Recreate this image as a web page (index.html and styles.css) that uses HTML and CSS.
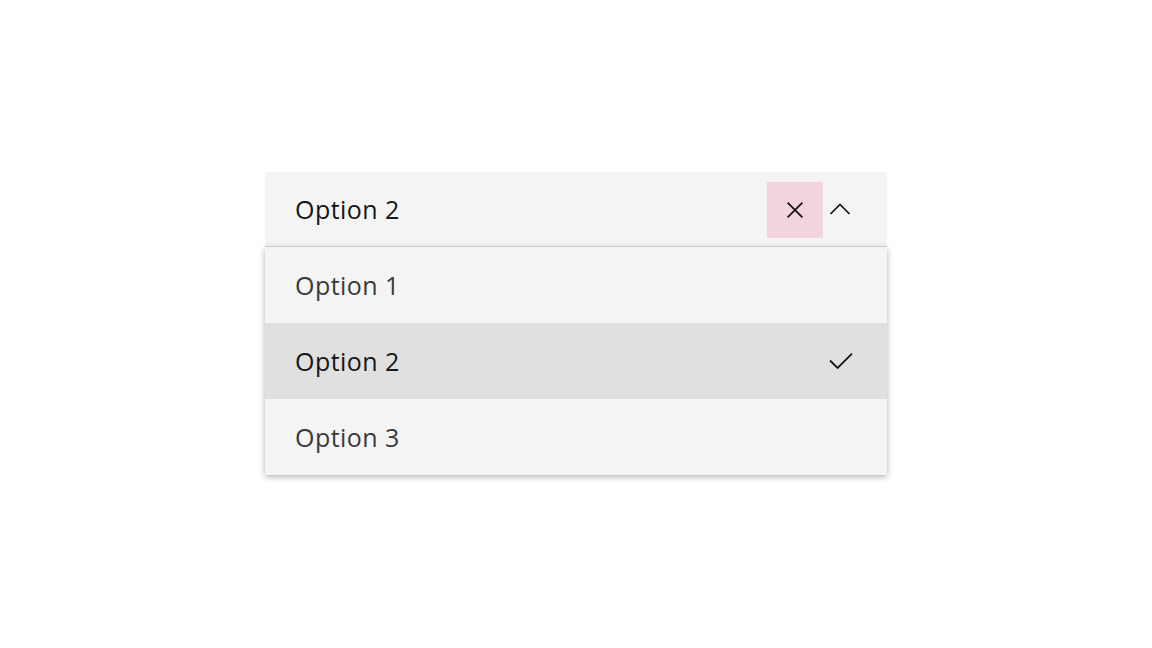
FILE: index.html
```html
<!DOCTYPE html>
<html>
<head>
<meta charset="utf-8">
<link rel="stylesheet" href="styles.css">
</head>
<body>
<div class="combo">
  <div class="field">
    <span class="value">Option 2</span>
    <button class="clear" aria-label="Clear">
      <svg width="24" height="24" viewBox="0 0 24 24"><path d="M4.6 4.6 L19.4 19.4 M19.4 4.6 L4.6 19.4" stroke="#161616" stroke-width="1.8" fill="none"/></svg>
    </button>
    <span class="chevron">
      <svg width="24" height="24" viewBox="0 0 24 24"><path d="M2.5 17 L12 7.5 L21.5 17" stroke="#161616" stroke-width="1.7" fill="none"/></svg>
    </span>
  </div>
  <ul class="menu">
    <li class="item">Option 1</li>
    <li class="item selected">Option 2
      <svg class="check" width="24" height="24" viewBox="0 0 24 24"><path d="M1 11.5 L8.6 19 L23 4.6" stroke="#161616" stroke-width="1.8" fill="none"/></svg>
    </li>
    <li class="item">Option 3</li>
  </ul>
</div>
</body>
</html>
```

FILE: styles.css
```css
html, body {
  margin: 0;
  padding: 0;
  height: 100%;
}
body {
  background: #ffffff;
  display: flex;
  align-items: center;
  justify-content: center;
  font-family: "Open Sans", "Noto Sans", sans-serif;
}
.combo {
  width: 622px;
  margin-top: -1px;
}
.field {
  height: 74px;
  background: #f4f4f4;
  border-bottom: 1px solid #dcdcdc;
  display: flex;
  align-items: center;
  padding: 0 35px 0 30px;
}
.value {
  flex: 1;
  font-size: 25px;
  color: #161616;
  letter-spacing: 0.45px;
}
.clear {
  width: 56px;
  height: 56px;
  background: #f2d3e0;
  border: none;
  padding: 0;
  display: flex;
  align-items: center;
  justify-content: center;
  margin-top: 1px;
}
.chevron {
  width: 24px;
  height: 24px;
  margin-left: 5px;
  display: flex;
}
.menu {
  list-style: none;
  margin: 0;
  padding: 0;
  background: #f4f4f4;
  box-shadow: 0 2px 6px rgba(0, 0, 0, 0.3);
}
.item {
  height: 76px;
  display: flex;
  align-items: center;
  justify-content: space-between;
  padding: 0 34px 0 30px;
  font-size: 25px;
  color: #393939;
  letter-spacing: 0.45px;
}
.item.selected {
  background: #e0e0e0;
  color: #161616;
}
.check {
  display: block;
}
```
